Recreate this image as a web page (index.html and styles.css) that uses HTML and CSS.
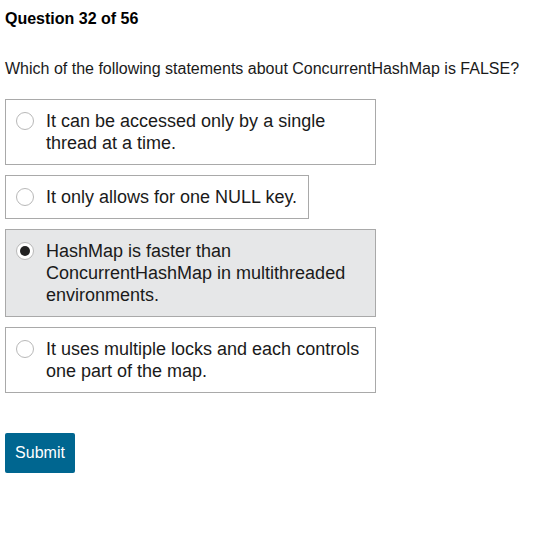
FILE: index.html
```html
<!DOCTYPE html>
<html>
<head>
<meta charset="utf-8">
<link rel="stylesheet" href="styles.css">
</head>
<body>
<div class="quiz">
  <h2 class="title">Question 32 of 56</h2>
  <p class="question">Which of the following statements about ConcurrentHashMap is FALSE?</p>
  <div class="options">
    <label class="option"><span class="radio"></span><span class="text">It can be accessed only by a single thread at a time.</span></label>
    <label class="option"><span class="radio"></span><span class="text">It only allows for one NULL key.</span></label>
    <label class="option selected"><span class="radio checked"></span><span class="text">HashMap is faster than ConcurrentHashMap in multithreaded environments.</span></label>
    <label class="option"><span class="radio"></span><span class="text">It uses multiple locks and each controls one part of the map.</span></label>
  </div>
  <button class="submit">Submit</button>
</div>
</body>
</html>
```
FILE: styles.css
```css
* { box-sizing: border-box; }
body {
  margin: 0;
  background: #fff;
  font-family: "Liberation Sans", Arial, sans-serif;
  color: #1a1a1a;
}
.quiz {
  padding: 9px 5px;
}
.title {
  margin: 0;
  font-size: 16px;
  line-height: 19px;
  font-weight: bold;
  color: #000;
}
.question {
  margin: 31px 0 0;
  font-size: 16px;
  line-height: 20px;
  color: #1a1a1a;
}
.options {
  margin-top: 20px;
  display: flex;
  flex-direction: column;
  align-items: flex-start;
  gap: 10px;
}
.option {
  display: flex;
  align-items: flex-start;
  max-width: 371px;
  border: 1px solid #a9a9a9;
  padding: 10px 11px 10px 10px;
  font-size: 18px;
  line-height: 22px;
  color: #1a1a1a;
  background: #fff;
}
.option.selected {
  background: #e6e7e8;
}
.radio {
  flex: none;
  width: 18px;
  height: 18px;
  margin: 2px 12px 0 0;
  border: 1px solid #b8b8b8;
  border-radius: 50%;
  background: #fff;
  position: relative;
}
.radio.checked::after {
  content: "";
  position: absolute;
  left: 3px;
  top: 3px;
  width: 10px;
  height: 10px;
  border-radius: 50%;
  background: #222;
}
.submit {
  display: block;
  margin-top: 40px;
  width: 70px;
  height: 40px;
  padding: 0;
  border: none;
  border-radius: 2px;
  background: #006690;
  color: #fff;
  font-family: "Liberation Sans", Arial, sans-serif;
  font-size: 16px;
}
```
